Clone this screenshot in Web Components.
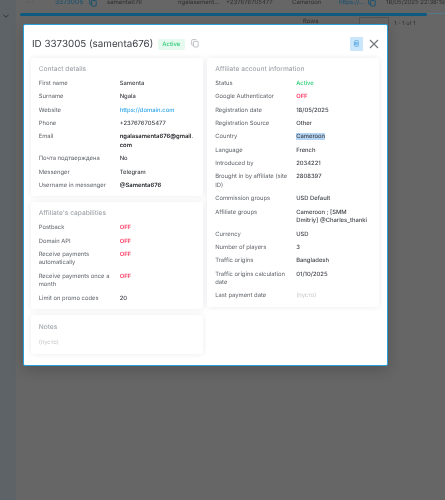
<!DOCTYPE html>
<html><head><meta charset="utf-8">
<style>
html,body{margin:0;padding:0;height:100%;overflow:hidden;background:#666}
body{font-family:Inter,"Liberation Sans",sans-serif;text-rendering:geometricPrecision;width:445px;height:500px;position:relative;filter:blur(.35px)}
</style></head><body>
<app-backdrop></app-backdrop>
<affiliate-modal>
  <info-card title="Contact details" slot="left">
    <info-row label="First name" value="Samenta"></info-row>
    <info-row label="Surname" value="Ngala"></info-row>
    <info-row label="Website" value="https://domain.com" kind="link"></info-row>
    <info-row label="Phone" value="+237676705477"></info-row>
    <info-row label="Email" value="ngalasamenta676@gmail.com" kind="strong"></info-row>
    <info-row label="Почта подтверждена" value="No"></info-row>
    <info-row label="Messenger" value="Telegram"></info-row>
    <info-row label="Username in messenger" value="@Samenta676" kind="strong"></info-row>
  </info-card>
  <info-card title="Affiliate's capabilities" slot="left">
    <info-row label="Postback" value="OFF" kind="off"></info-row>
    <info-row label="Domain API" value="OFF" kind="off"></info-row>
    <info-row label="Receive payments automatically" value="OFF" kind="off"></info-row>
    <info-row label="Receive payments once a month" value="OFF" kind="off"></info-row>
    <info-row label="Limit on promo codes" value="20"></info-row>
  </info-card>
  <info-card title="Notes" slot="left" notes>
    <info-row value="(пусто)" kind="empty" single></info-row>
  </info-card>
  <info-card title="Affiliate account information" slot="right">
    <info-row label="Status" value="Active" kind="on"></info-row>
    <info-row label="Google Authenticator" value="OFF" kind="off"></info-row>
    <info-row label="Registration date" value="18/05/2025"></info-row>
    <info-row label="Registration Source" value="Other"></info-row>
    <info-row label="Country" value="Cameroon" kind="selected"></info-row>
    <info-row label="Language" value="French"></info-row>
    <info-row label="Introduced by" value="2034221"></info-row>
    <info-row label="Brought in by affiliate (site ID)" value="2808397"></info-row>
    <info-row label="Commission groups" value="USD Default"></info-row>
    <info-row label="Affiliate groups" value="Cameroon ; [SMM Dmitriy] @Charles_thanki"></info-row>
    <info-row label="Currency" value="USD"></info-row>
    <info-row label="Number of players" value="3"></info-row>
    <info-row label="Traffic origins" value="Bangladesh"></info-row>
    <info-row label="Traffic origins calculation date" value="01/10/2025"></info-row>
    <info-row label="Last payment date" value="(пусто)" kind="empty"></info-row>
  </info-card>
</affiliate-modal>
<script>
const copyIcon=c=>`<svg width="8" height="9" viewBox="0 0 8 9" fill="none" stroke="${c}" stroke-width=".9"><rect x="2.6" y="2.4" width="4.6" height="5.6" rx=".7"/><path d="M5.4 1.2V1.1A.6.6 0 0 0 4.8.6H1.4a.7.7 0 0 0-.7.7V5.6a.6.6 0 0 0 .6.6h1"/></svg>`;
class AppBackdrop extends HTMLElement{
  constructor(){super();this.attachShadow({mode:'open'}).innerHTML=`<style>
  :host{display:flex;width:445px;height:500px;background:#666;color:#2e2e2e;font-size:6px;overflow:hidden}
  .side{width:16px;background:#5d6366;flex:none;padding-top:11.5px;box-sizing:border-box;display:flex;justify-content:center}
  .side svg{margin-left:-5px}
  main{flex:1;min-width:0;display:flex;flex-direction:column}
  .row{height:9px;display:flex;align-items:center;white-space:nowrap;margin-top:-2.5px;position:relative}
  .row span,.row svg{flex:none}
  .a{color:#124f70}
  .bar{height:3.6px;background:#0e5b82;border-radius:2px;width:407px;margin-left:4px;margin-top:6px}
  .line{height:1px;background:#55778a;margin-left:411px;margin-top:-3.6px}
  .pager{display:flex;align-items:flex-start;margin-top:3px;padding-left:287px;height:15px;white-space:nowrap}
  .rows{margin-top:1.5px}
  .sel{width:30px;height:14px;border:1px solid #555;box-sizing:border-box;margin-left:41px;flex:none}
  .count{margin-left:5px;margin-top:4px;font-size:5.6px}
  .dots{margin-left:10px;width:29px;color:#444;letter-spacing:1px}
  </style>
  <div class="side"><svg width="8" height="8" viewBox="0 0 8 8"><path d="M1.5 2.8 4 5.2 6.5 2.8" fill="none" stroke="#333" stroke-width="1"/></svg></div>
  <main>
    <div class="row">
      <span class="dots">···</span>
      <span class="a" style="width:34px;font-size:6.6px">3373005</span>
      <span style="width:8px;margin-right:10px;display:block;line-height:0">${copyIcon('#124f70')}</span>
      <span style="width:71px">samenta676</span>
      <span style="width:48px">ngalasament...</span>
      <span style="width:66px">+237676705477</span>
      <span style="width:47px">Cameroon</span>
      <span class="a" style="width:29px">https://...</span>
      <span style="width:18px;display:block;line-height:0">${copyIcon('#124f70')}</span>
      <span>18/05/2025 22:38:19</span>
    </div>
    <div class="bar"></div><div class="line"></div>
    <div class="pager"><span class="rows">Rows</span><div class="sel"></div><span class="count">1 - 1 of 1</span></div>
  </main>`;}
}
customElements.define('app-backdrop',AppBackdrop);

class AffiliateModal extends HTMLElement{
  constructor(){super();this.attachShadow({mode:'open'}).innerHTML=`<style>
  :host{display:block;position:absolute;left:23px;top:24px;width:365px;height:341.5px;box-sizing:border-box;background:#fff;border:1.3px solid #2a9fdc;border-radius:2px;box-shadow:0 4px 14px rgba(0,0,0,.18);padding:0 6.7px;color:#333}
  header{height:32.7px;display:flex;align-items:center;padding:7px 0 0 1.3px;box-sizing:border-box}
  h1{font-size:9.8px;font-weight:400;margin:0;color:#3d4147;white-space:nowrap}
  .badge{margin-left:4.5px;font-size:6px;font-weight:500;height:11px;line-height:11px;padding:0 4.5px;background:#e5f9ee;color:#2ecb76;border-radius:2px}
  .copy{margin-left:6px;display:block;margin-top:-2px}
  .spacer{flex:1}
  .doc{width:13px;height:14px;background:#c9e6fa;display:flex;align-items:center;justify-content:center;border-radius:1px;margin-top:-2px}
  .x{margin:-2px 1px 0 6px;display:block}
  .cols{display:flex;gap:5px;align-items:flex-start}
  .col{display:flex;flex-direction:column;gap:5.5px;width:172px}
  </style>
  <header><h1>ID 3373005 (samenta676)</h1><span class="badge">Active</span>
  <span class="copy" style="line-height:0">${copyIcon('#b4b8bc')}</span>
  <span class="spacer"></span>
  <span class="doc"><svg width="7" height="7" viewBox="0 0 7 7" fill="none" stroke="#5aa9e0" stroke-width=".7"><rect x="1.8" y=".6" width="3.6" height="5.8" rx=".5"/><path d="M.8 2.6h4M.8 3.6h4M.8 4.6h4"/></svg></span>
  <svg class="x" width="10" height="10" viewBox="0 0 10 10"><path d="M1 1 9 9M9 1 1 9" stroke="#70757a" stroke-width="1.1" fill="none"/></svg>
  </header>
  <div class="cols"><div class="col"><slot name="left"></slot></div><div class="col" style="margin-left:-.5px"><slot name="right"></slot></div></div>`;}
}
customElements.define('affiliate-modal',AffiliateModal);

class InfoCard extends HTMLElement{
  constructor(){super();const s=this.attachShadow({mode:'open'});s.innerHTML=`<style>
  :host{display:block;background:#fff;border-radius:2px;box-shadow:0 0 5px rgba(40,60,80,.1);padding:7px 8px 6px}
  :host([notes]){padding:8.5px 8px 6.5px}
  h2{margin:0 0 6.2px;font-size:6.6px;line-height:9px;font-weight:500;color:#a3a8ae}
  :host([notes]) h2{margin-bottom:6.5px}
  .rows{display:flex;flex-direction:column;gap:4.75px}
  </style><h2></h2><div class="rows"><slot></slot></div>`;
  s.querySelector('h2').textContent=this.getAttribute('title');this.removeAttribute('title');}
}
customElements.define('info-card',InfoCard);

class InfoRow extends HTMLElement{
  constructor(){super();const s=this.attachShadow({mode:'open'});
  const k=this.getAttribute('kind')||'';
  s.innerHTML=`<style>
  :host{display:grid;grid-template-columns:81px 1fr;font-size:5.85px;line-height:8.6px}
  :host([single]){grid-template-columns:1fr}
  .l{color:#5d6167;padding-right:8px}
  .v{color:#3c3f44;overflow-wrap:anywhere;font-weight:500;padding-right:2.5px}
  .link{color:#2ea6e6}.strong{color:#23262a;font-weight:600;padding-right:0}
  .off{color:#ff4d73;font-weight:700}.on{color:#30cf7a}
  .empty{color:#c4c7cb;font-weight:400}
  .selected span{background:#b5d5f5}
  </style>${this.hasAttribute('single')?'':'<div class="l"></div>'}<div class="v ${k}"><span></span></div>`;
  const l=s.querySelector('.l'); if(l) l.textContent=this.getAttribute('label');
  s.querySelector('.v span').textContent=this.getAttribute('value');}
}
customElements.define('info-row',InfoRow);
</script>
</body></html>
